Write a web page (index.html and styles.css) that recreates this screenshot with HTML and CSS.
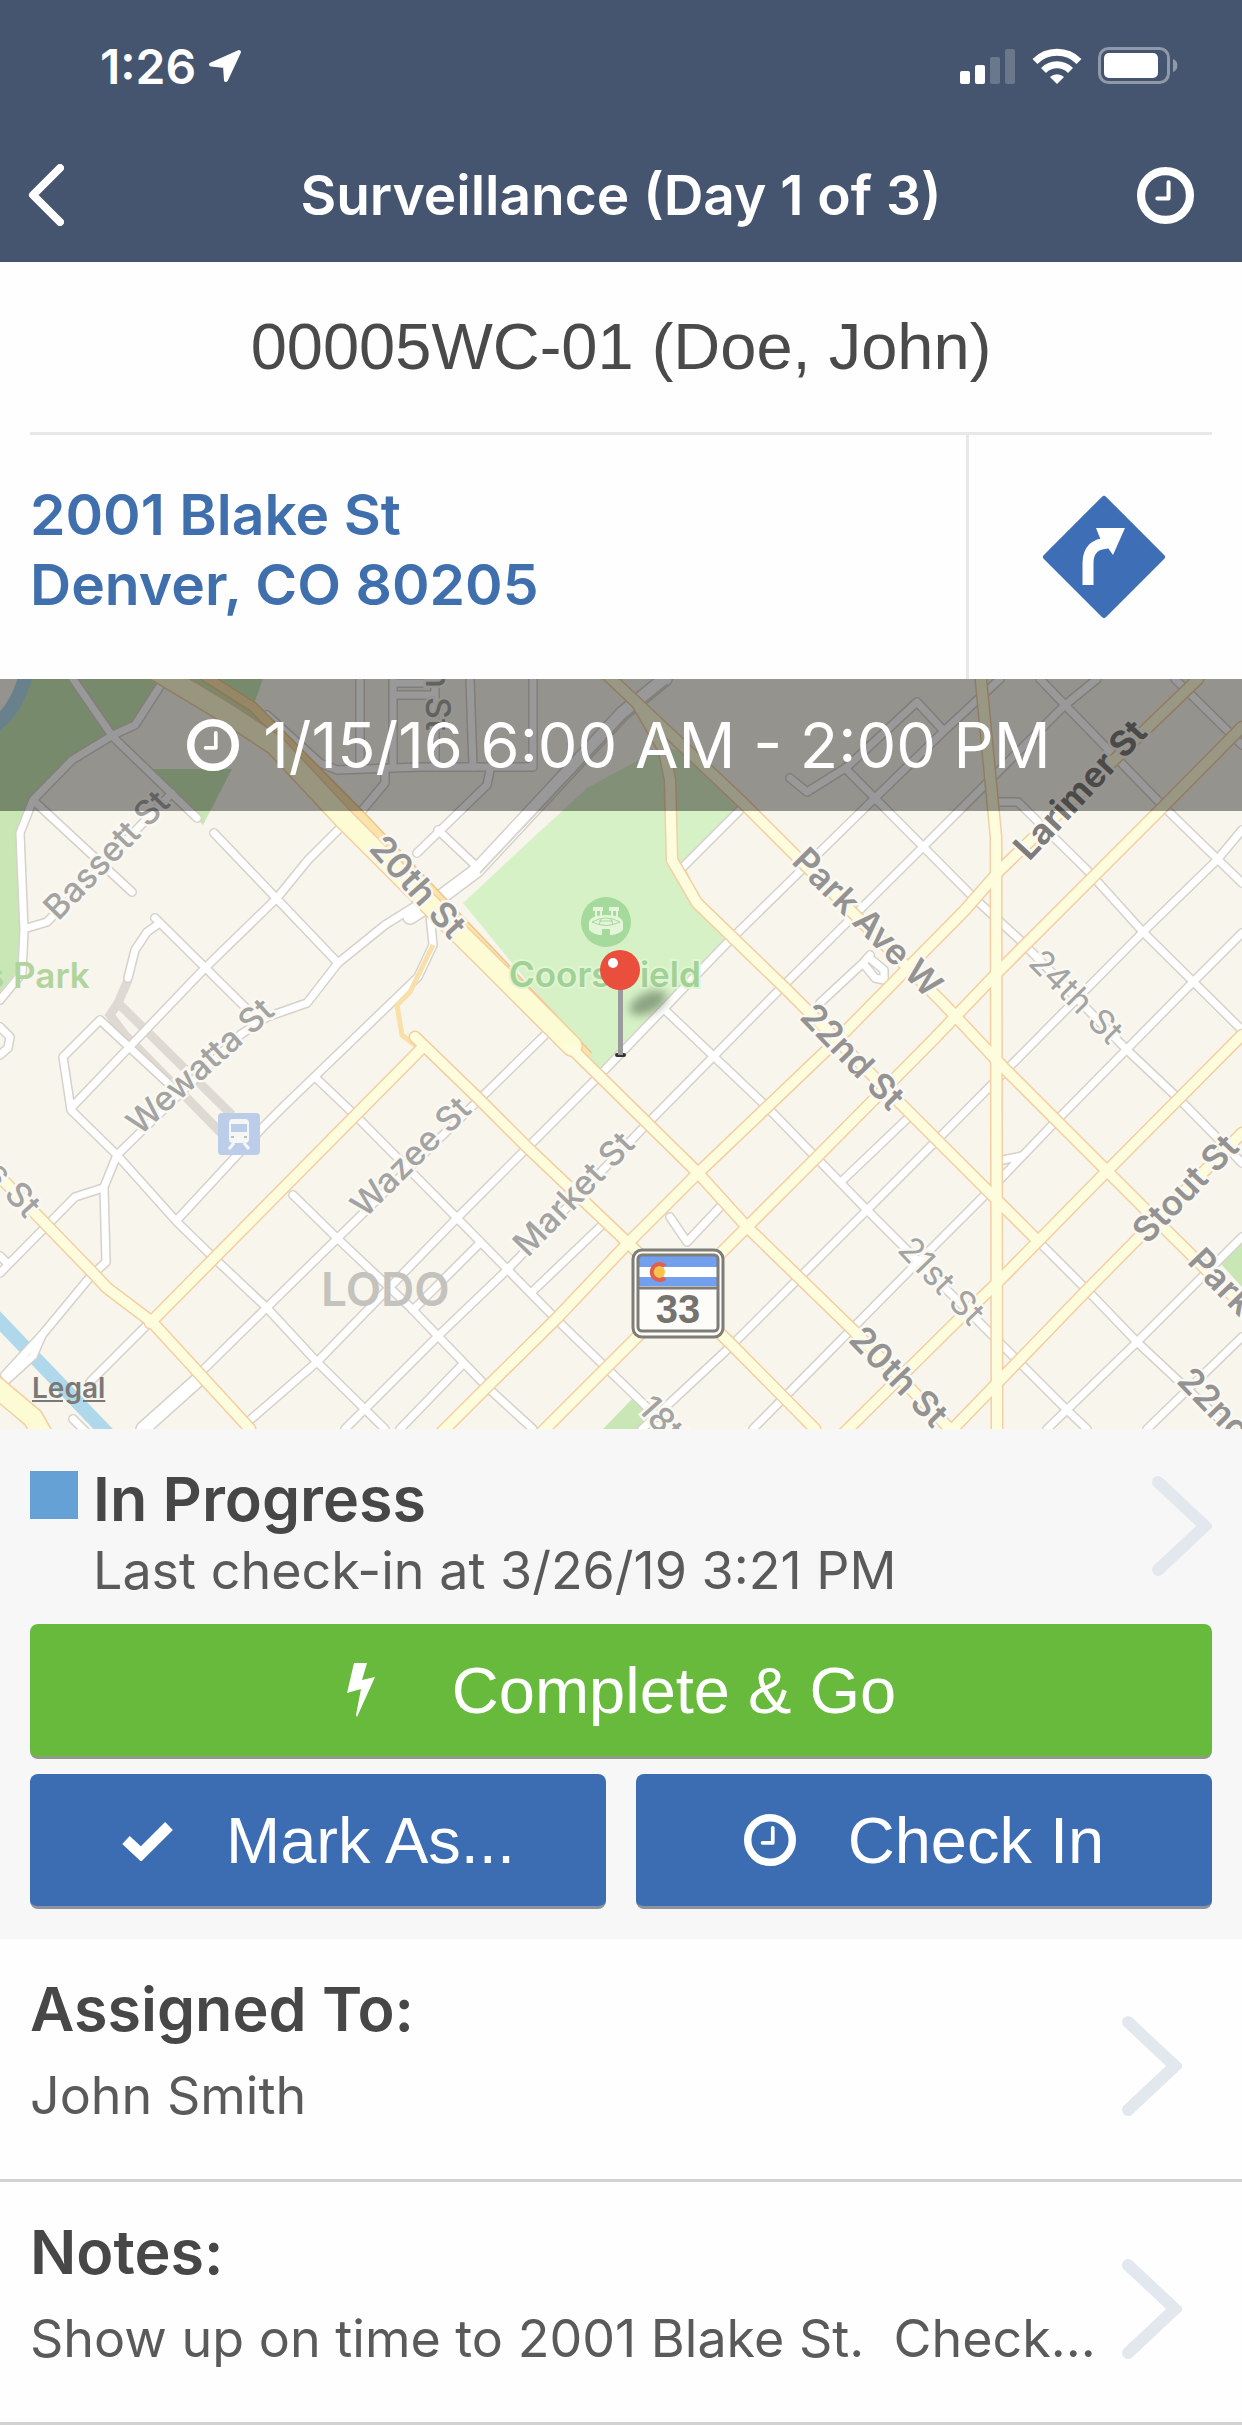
FILE: index.html
```html
<!DOCTYPE html>
<html lang="en">
<head>
  <meta charset="UTF-8">
  <meta name="viewport" content="width=device-width, initial-scale=1">
  <title>Surveillance (Day 1 of 3)</title>
  <link rel="stylesheet" href="styles.css">
</head>
<body>
  <svg width="0" height="0" class="defs">
    <symbol id="clock" viewBox="0 0 56 56">
      <circle cx="28" cy="28" r="24" fill="none" stroke="currentColor" stroke-width="8"/>
      <path d="M31 15v16H20" fill="none" stroke="currentColor" stroke-width="4" stroke-linecap="round" stroke-linejoin="round"/>
    </symbol>
    <symbol id="chevron" viewBox="0 0 60 100">
      <path d="M6 6L53 50L6 94" fill="none" stroke="currentColor" stroke-width="12" stroke-linecap="round" stroke-linejoin="miter"/>
    </symbol>
  </svg>

  <header class="header">
    <div class="status-bar">
      <div class="time">
        <span>1:26</span>
        <svg width="34" height="34" viewBox="0 0 34 34"><path d="M31 3L3 15.500L17 17L18 31Z" fill="#fff" stroke="#fff" stroke-width="4" stroke-linejoin="round"/></svg>
      </div>
      <div class="indicators">
        <svg width="56" height="36" viewBox="0 0 56 36" fill="#fff">
          <rect x="0" y="23" width="10" height="13" rx="2"/>
          <rect x="15" y="17" width="10" height="19" rx="2"/>
          <rect x="30" y="9" width="10" height="27" rx="2" opacity=".2"/>
          <rect x="45" y="1" width="10" height="35" rx="2" opacity=".2"/>
        </svg>
        <svg width="50" height="36" viewBox="0 0 50 36" fill="none" stroke="#fff" stroke-width="7">
          <path d="M3 13.500A31 31 0 0 1 47 13.500"/>
          <path d="M11.500 22.500A19 19 0 0 1 38.500 22.500"/>
          <path d="M18 29A10 10 0 0 1 32 29L25 36Z" fill="#fff" stroke="none"/>
        </svg>
        <svg width="80" height="38" viewBox="0 0 80 38">
          <rect x="1.500" y="1.500" width="69" height="34" rx="9" fill="none" stroke="#fff" stroke-width="3" opacity=".4"/>
          <rect x="6" y="6" width="54" height="25" rx="5" fill="#fff"/>
          <path d="M75 12a7 7 0 0 1 0 13z" fill="#fff" opacity=".4"/>
        </svg>
      </div>
    </div>
    <nav class="navbar">
      <a href="#" class="back" aria-label="Back">
        <svg width="36" height="62" viewBox="0 0 36 62"><path d="M32 4L5 31L32 58" fill="none" stroke="#fff" stroke-width="8" stroke-linecap="round" stroke-linejoin="round"/></svg>
      </a>
      <h1>Surveillance (Day 1 of 3)</h1>
      <button type="button" class="history" aria-label="History"><svg width="57" height="57"><use href="#clock"/></svg></button>
    </nav>
  </header>

  <main>
    <h2 class="case-name">00005WC-01 (Doe, John)</h2>

    <div class="location">
      <a href="#" class="address">2001 Blake St<br>Denver, CO 80205</a>
      <a href="#" class="directions" aria-label="Directions">
        <svg width="124" height="124" viewBox="0 0 124 124">
          <path d="M62 4L120 62L62 120L4 62Z" fill="#3e6eb5" stroke="#3e6eb5" stroke-width="6" stroke-linejoin="round"/>
          <path d="M46 90V68Q46 49 66 48" fill="none" stroke="#fff" stroke-width="11"/>
          <path d="M54 33H83L71 60L66 53L58 43Z" fill="#fff"/>
        </svg>
      </a>
    </div>

    <div class="map">
      <svg class="map-canvas" viewBox="0 679 1242 750">
        <defs>
          <filter id="blur" x="-50%" y="-100%" width="200%" height="300%"><feGaussianBlur stdDeviation="5"/></filter>
          <!-- local streets -->
          <g id="streets">
            <path d="M73 679L113 737L197 818"/>
            <path d="M162 683L135 725L113 735L72 760L33 800L20 833L24 930L22 973L0 1000"/>
            <path d="M35 802L132 892M27 928L47 922L172 793"/>
            <path d="M214 833L338 963M340 828L308 860L277 898L205 968L72 1107"/>
            <path d="M417 905L385 925L338 963L307 1003L267 1017L240 1035L117 1155L104 1187L106 1262L90 1277L42 1335L5 1375"/>
            <path d="M155 918L245 1007M157 925L147 932L135 950L128 978"/>
            <path d="M170 1085L100 1020L63 1057L71 1110L117 1155L177 1222L213 1257L267 1308L317 1362L385 1429"/>
            <path d="M0 1027L10 1037L8 1048L0 1055M0 1256L8 1264"/>
            <path d="M177 1220L263 1127L283 1107L418 977L433 945L430 915"/>
            <path d="M0 1273L75 1197L103 1188M145 1327L90 1382M73 1419L85 1431M42 1335L33 1356L0 1386"/>
            <path d="M203 1370L545 1035"/>
            <path d="M250 1420L317 1362L457 1218L597 1078L727 943L875 798L945 730L1000 679"/>
            <path d="M345 1429L437 1337L507 1270L643 1128L777 992L923 847L1065 705L1097 679"/>
            <path d="M413 1310L480 1243M532 1292L600 1227M400 1429L462 1365"/>
            <path d="M293 1195L337 1238L410 1307L487 1387L533 1429"/>
            <path d="M315 1077L357 1117L457 1218L557 1320L657 1417"/>
            <path d="M665 1010L767 1107L867 1210L980 1323L1067 1410L1087 1429"/>
            <path d="M843 1180L908 1118M670 1217L687 1242L720 1207"/>
            <path d="M360 679V767M393 679V767M435 679V767M470 679L473 767M393 683H435M393 695H435"/>
            <path d="M267 715L320 763L337 770L420 767H533V679M385 768V783L360 813M490 770L487 785L417 853M438 830L477 867"/>
            <path d="M683 867L743 807M790 778L807 792L847 767L917 702L943 730"/>
            <path d="M997 802H1018L1087 870L1143 932L1242 1030"/>
            <path d="M845 768L973 897L1020 940L1127 1050L1180 1100L1242 1163"/>
            <path d="M1040 679L1065 705L1167 810L1242 883M1175 679L1242 745"/>
            <path d="M1242 830L1217 860L1143 932L937 1140L867 1210L730 1347L642 1429"/>
            <path d="M1242 933L1193 982L1057 1120L987 1193L913 1267L753 1429"/>
            <path d="M1037 1240L1087 1290L1137 1342L1230 1429M1242 1237L1137 1342L1047 1429M1242 1337L1147 1429"/>
            <path d="M820 1003L863 963L870 955M863 963L875 978L884 980L884 970L872 960M1003 1160L1022 1156"/>
          </g>
          <!-- wider streets -->
          <g id="wide-streets">
            <path d="M665 679L623 713L477 870L437 900L410 917M200 1378L143 1429"/>
          </g>
          <!-- main roads -->
          <g id="roads">
            <path d="M420 1050L150 1323M0 1177L93 1273L107 1288L152 1322L250 1429"/>
            <path d="M570 1047L698 1173L747 1227L853 1330L950 1429"/>
            <path d="M415 1037L477 1097L527 1147L628 1243L730 1343L815 1429"/>
            <path d="M440 1434L487 1387L557 1318L628 1243L698 1173L830 1047L965 910L1000 870L1198 679"/>
            <path d="M540 1434L607 1367L747 1227L817 1157L933 1040L997 973L1093 877L1163 807L1242 727"/>
            <path d="M980 670L996 837L997 1434"/>
            <path d="M602 670L637 703L743 803L943 1003L1003 1067L1153 1217L1242 1305"/>
            <path d="M637 703L664 750L670 780L672 860L697 903L787 990L937 1140L1037 1240"/>
            <path d="M843 1434L953 1325L997 1283L1108 1170L1242 1035M948 1434L1087 1290L1242 1133"/>
          </g>
          <g id="big-roads">
            <path d="M155 670L225 712L275 745L345 820L420 895L483 957L572 1046M-5 1386L33 1418L42 1434"/>
          </g>
        </defs>

        <rect x="0" y="679" width="1242" height="750" fill="#f8f5ed"/>
        <g fill="#c8e7b4">
          <path d="M30 679H162L135 725L72 760L33 800L20 833L24 930L22 965L0 992V720Z"/>
          <path d="M185 679H263L253 707L275 740Z"/>
          <path d="M153 769H232L203 825Z"/>
          <path d="M603 1429L633 1398L652 1417L642 1429ZM1220 1263L1242 1240V1287Z"/>
        </g>
        <path d="M463 903L523 847L587 788L663 747L690 753L740 807L685 865L700 903L727 943L600 1070L575 1040Z" fill="#d7f1c7"/>
        <path d="M27 670Q18 710 -8 728M-5 1316L37 1360L108 1434" fill="none" stroke="#afd8eb" stroke-width="14"/>
        <path d="M0 679H14L0 705Z" fill="#f8f5ed"/>
        <path d="M128 980L118 1003L232 1115M118 1003L110 1015L125 1035L230 1142" class="rail"/>

        <use href="#streets" class="street-case"/>
        <use href="#wide-streets" class="wide-case"/>
        <use href="#streets" class="street"/>
        <use href="#wide-streets" class="wide"/>
        <path d="M668 684L626 718L480 873" stroke="#d9d5ce" stroke-width="2" fill="none"/>
        <path d="M203 675L253 707L360 815L470 931L588 1056" fill="none" stroke="#efc58c" stroke-width="11"/>
        <path d="M203 675L253 707L360 815L470 931L588 1056" fill="none" stroke="#fbe3ab" stroke-width="8"/>
        <path d="M433 945L410 992L397 1005L402 1035L424 1052" fill="none" stroke="#f9dfa8" stroke-width="5"/>
        <use href="#big-roads" class="big-case"/>
        <use href="#roads" class="road-case"/>
        <use href="#big-roads" class="big"/>
        <use href="#roads" class="road"/>

        <!-- transit stop -->
        <rect x="218" y="1113" width="42" height="42" rx="4" fill="#bccde9"/>
        <rect x="229" y="1119" width="20" height="24" rx="4" fill="#f6f6f4"/>
        <rect x="231" y="1124" width="16" height="8" fill="#bccde9"/>
        <path d="M231 1137h3M244 1137h3" stroke="#b5bfd2" stroke-width="2"/>
        <path d="M234 1143L229 1149M244 1143L249 1149" stroke="#f6f6f4" stroke-width="3"/>

        <!-- street names -->
        <g class="label">
          <text transform="translate(115 863) rotate(-46)">Bassett St</text>
          <text transform="translate(208 1075) rotate(-42)">Wewatta St</text>
          <text transform="translate(419 1165) rotate(-45)">Wazee St</text>
          <text transform="translate(582 1202) rotate(-46)">Market St</text>
          <text transform="translate(426 699) rotate(90)">n St</text>
          <text transform="translate(5 1197) rotate(48)">s St</text>
          <text transform="translate(659 1434) rotate(48)">18th</text>
        </g>
        <g class="label light">
          <text transform="translate(1068 1005) rotate(45)">24th St</text>
          <text transform="translate(933 1289) rotate(46)">21st St</text>
        </g>
        <g class="label strong">
          <text transform="translate(409 895) rotate(48)">20th St</text>
          <text transform="translate(859 931) rotate(45)">Park Ave W</text>
          <text transform="translate(844 1065) rotate(46)">22nd St</text>
          <text transform="translate(1194 1197) rotate(-46)">Stout St</text>
          <text transform="translate(890 1385) rotate(46)">20th St</text>
          <text transform="translate(1213 1290) rotate(46)">Park</text>
          <text transform="translate(1221 1429) rotate(46)">22nd St</text>
        </g>
        <g class="label dark">
          <text transform="translate(1089 798) rotate(-47)">Larimer St</text>
        </g>
        <text x="-15" y="988" class="park">s Park</text>
        <text x="509" y="987" class="park coors">Coors Field</text>
        <text x="321" y="1306" class="district">LODO</text>

        <!-- stadium -->
        <circle cx="606" cy="922" r="25" fill="#a6d99c"/>
        <g fill="#e4f5da">
          <path d="M593 907h10v4h-10zM609 907h10v4h-10zM595 911h2v6h-2zM600 911h2v6h-2zM611 911h2v6h-2zM616 911h2v6h-2z"/>
          <path d="M589 922Q591 915 606 915Q621 915 623 922V930Q618 935 610 935V929H602V935Q594 935 589 930Z"/>
        </g>
        <path d="M592 922Q606 914 620 922Q606 929 592 922M601 919L599 925M611 919L613 925M599 921H613" fill="none" stroke="#a6d99c" stroke-width="1"/>

        <!-- pin -->
        <ellipse cx="648" cy="1003" rx="20" ry="10" transform="rotate(-25 648 1003)" fill="#587052" opacity=".6" filter="url(#blur)"/>
        <rect x="615" y="1053" width="11" height="4" rx="2" fill="#333"/>
        <rect x="618" y="988" width="5" height="67" fill="#9b9b9b"/>
        <circle cx="620" cy="970" r="20" fill="#e94f3c"/>
        <circle cx="613" cy="963" r="5" fill="#fff"/>

        <!-- route shield -->
        <rect x="633" y="1250" width="90" height="87" rx="9" fill="#fdfcf8" stroke="#7f7d78" stroke-width="3"/>
        <path d="M639 1256h79v30h-79z" fill="#73a0ee"/>
        <path d="M639 1267h79v10h-79z" fill="#fff"/>
        <rect x="638" y="1255" width="80" height="76" rx="4" fill="none" stroke="#7f7d78" stroke-width="3"/>
        <path d="M639 1288h79" stroke="#7f7d78" stroke-width="3"/>
        <circle cx="659" cy="1272" r="6" fill="#f8c34d"/>
        <path d="M665 1266A8 8 0 1 0 665 1278" fill="none" stroke="#e1604b" stroke-width="4"/>
        <text x="678" y="1323" class="route">33</text>
      </svg>
      <div class="schedule">
        <svg width="52" height="52"><use href="#clock"/></svg>
        <span>1/15/16 6:00 AM - 2:00 PM</span>
      </div>
      <a href="#" class="legal">Legal</a>
    </div>

    <section class="progress">
      <a href="#" class="progress-info">
        <span class="swatch"></span>
        <div class="progress-text">
          <h3>In Progress</h3>
          <p>Last check-in at 3/26/19 3:21 PM</p>
        </div>
        <svg class="chevron" width="60" height="100"><use href="#chevron"/></svg>
      </a>
      <div class="buttons">
        <button type="button" class="btn btn-complete">
          <svg width="30" height="56" viewBox="0 0 30 56"><path d="M8 1H21L16 18L29 15L11 55L10 53L15 27L1 31Z" fill="#fff"/></svg>
          <span>Complete &amp; Go</span>
        </button>
        <div class="button-row">
          <button type="button" class="btn">
            <svg width="53" height="41" viewBox="0 0 53 41"><path d="M5 20L20 34L48 6" fill="none" stroke="#fff" stroke-width="11"/></svg>
            <span>Mark As...</span>
          </button>
          <button type="button" class="btn">
            <svg width="52" height="52"><use href="#clock"/></svg>
            <span>Check In</span>
          </button>
        </div>
      </div>
    </section>

    <a href="#" class="row">
      <div class="row-text">
        <h3>Assigned To:</h3>
        <p>John Smith</p>
      </div>
      <svg class="chevron" width="60" height="100"><use href="#chevron"/></svg>
    </a>
    <a href="#" class="row">
      <div class="row-text">
        <h3>Notes:</h3>
        <p>Show up on time to 2001 Blake St.&nbsp; Check...</p>
      </div>
      <svg class="chevron" width="60" height="100"><use href="#chevron"/></svg>
    </a>
  </main>
</body>
</html>
```

FILE: styles.css
```css
* { box-sizing: border-box; }
body { margin: 0; background: #fefefe; color: #4a4a4a; font-family: Inter, "Liberation Sans", sans-serif; }
h1, h2, h3, p { margin: 0; }
a { color: inherit; text-decoration: none; }
button { font-family: inherit; border: 0; padding: 0; cursor: pointer; }
svg { display: block; flex-shrink: 0; }
.defs { position: absolute; }

/* header */
.header { background: #46556f; color: #fff; }
.status-bar { display: flex; justify-content: space-between; align-items: center; height: 132px; padding: 0 64px 0 100px; }
.time { display: flex; align-items: center; gap: 12px; font-size: 48px; font-weight: 600; }
.indicators { display: flex; align-items: center; gap: 16px; }
.navbar { display: flex; align-items: center; height: 130px; padding: 0 48px 4px 28px; }
.navbar h1 { flex: 1; padding-left: 20px; font-size: 55px; font-weight: 600; text-align: center; }
.back { width: 57px; }
.history { background: none; color: #fff; }

/* case and address */
.case-name { margin: 0 30px; border-bottom: 3px solid #e8e8e8; font: 400 65px/170px "Liberation Sans", sans-serif; text-align: center; }
.location { display: flex; }
.address { flex: 1; padding: 45px 30px 59px; color: #406fae; font-size: 57px; font-weight: 600; line-height: 70px; }
.directions { display: flex; align-items: center; justify-content: center; width: 276px; padding-right: 3px; border-left: 3px solid #e8e8e8; }

/* map */
.map { position: relative; }
.map-canvas { width: 100%; }
.schedule { position: absolute; top: 0; left: 0; right: 0; display: flex; align-items: center; justify-content: center; gap: 24px; height: 132px; padding-right: 4px; background: rgba(0, 0, 0, .4); color: #fff; font-size: 63px; }
.legal { position: absolute; left: 32px; bottom: 24px; color: #7b7977; font-size: 28px; font-weight: 600; text-decoration: underline; }
.street-case, .street, .wide-case, .wide, .road-case, .road, .big-case, .big { fill: none; stroke-linecap: round; stroke-linejoin: round; }
.street-case { stroke: #d6d1cb; stroke-width: 10px; }
.street { stroke: #fff; stroke-width: 7px; }
.wide-case { stroke: #d6d1cb; stroke-width: 16px; }
.wide { stroke: #fff; stroke-width: 13px; }
.road-case { stroke: #f3cfa2; stroke-width: 13px; }
.road { stroke: #fdfddd; stroke-width: 10px; }
.big-case { stroke: #f3cfa2; stroke-width: 22px; }
.big { stroke: #fdfbd3; stroke-width: 19px; }
.rail { fill: none; stroke: #dedad3; stroke-width: 9px; }
.label { fill: #a3a3a2; font-size: 34px; font-weight: 500; text-anchor: middle; stroke: #faf8f2; stroke-width: 5px; paint-order: stroke; }
.light { font-weight: 400; }
.strong { fill: #949391; font-size: 35px; font-weight: 600; }
.dark { fill: #7e7c79; font-size: 35px; font-weight: 700; }
.park { fill: #b1d49c; font-size: 35px; font-weight: 600; }
.coors { fill: #a2d196; stroke: #e0f5d3; stroke-width: 4px; paint-order: stroke; }
.district { fill: #c4c2bd; font-size: 46px; font-weight: 600; }
.route { fill: #75736e; font: 700 40px "Liberation Sans", sans-serif; text-anchor: middle; }

/* progress */
.progress { padding: 34px 30px 30px; background: #f7f7f7; }
.progress-info { display: flex; gap: 15px; margin-bottom: 17px; }
.swatch { width: 48px; height: 48px; margin-top: 8px; background: #65a1d4; }
.progress-text { flex: 1; }
h3 { color: #474747; font-size: 61px; font-weight: 600; line-height: 72px; }
p { color: #5a5a5a; font-size: 52px; line-height: 72px; }
.chevron { color: #e3e8ef; }
.progress-info .chevron { margin-top: 13px; }
.buttons { display: flex; flex-direction: column; gap: 15px; }
.button-row { display: flex; gap: 30px; }
.btn { display: flex; flex: 1; align-items: center; justify-content: center; gap: 52px; height: 135px; border-bottom: 3px solid #8b93a0; border-radius: 8px; background: #3c6db2; color: #fff; font: 400 65px "Liberation Sans", sans-serif; }
.btn-complete { flex: none; gap: 76px; border-bottom-color: #8d9c83; background: #68ba3c; }

/* rows */
.row { display: flex; align-items: flex-end; padding: 34px 60px 47px 30px; border-bottom: 3px solid #d2d2d2; }
.row-text { flex: 1; min-width: 0; }
.row p { margin-top: 15px; overflow: hidden; white-space: nowrap; text-overflow: ellipsis; }
.row .chevron { margin-bottom: 16px; }
```
